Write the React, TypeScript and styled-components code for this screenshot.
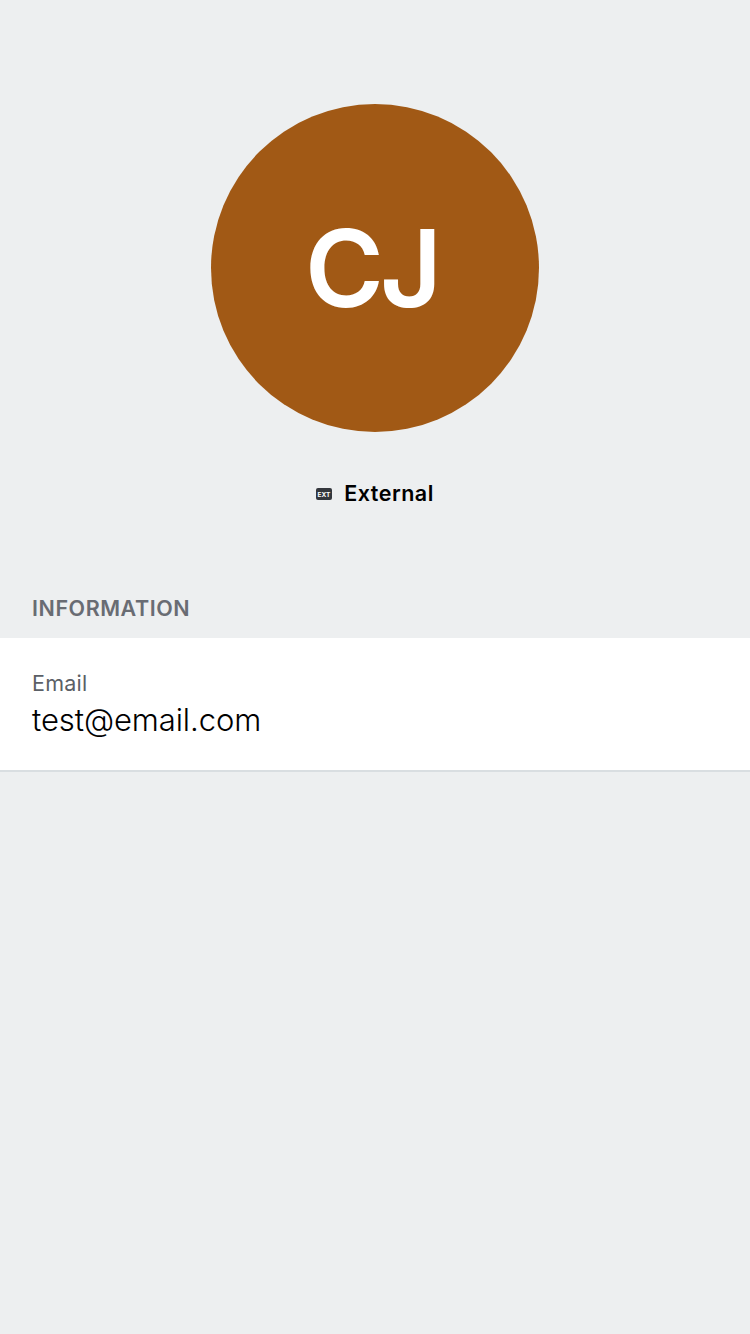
import React from "react";
import styled, { createGlobalStyle } from "styled-components";

const GlobalStyle = createGlobalStyle`
  * { box-sizing: border-box; }
  body { margin: 0; background: #edeff0; font-family: Inter, sans-serif; color: #000; -webkit-font-smoothing: antialiased; }
`;

const Screen = styled.main`
  display: flex;
  flex-direction: column;
  min-height: 1334px;
  background: #edeff0;
`;

const Profile = styled.header`
  display: flex;
  flex-direction: column;
  align-items: center;
  height: 588px;
  padding-top: 104px;
`;

const Avatar = styled.div`
  display: flex;
  align-items: center;
  justify-content: center;
  width: 328px;
  height: 328px;
  padding: 1px 7px 0 0;
  border-radius: 50%;
  background: #a15915;
  color: #fff;
  font-size: 107px;
  font-weight: 600;
  letter-spacing: -4px;
  line-height: 1;
`;

const Role = styled.div`
  display: flex;
  align-items: center;
  gap: 12px;
  margin-top: 46px;
  height: 30px;
  font-size: 21.5px;
  font-weight: 600;
  letter-spacing: 0.5px;
  line-height: 30px;

  svg {
    flex: none;
    margin-top: 2px;
  }
`;

const SectionTitle = styled.h2`
  margin: 0;
  height: 50px;
  padding: 5px 32px 0;
  color: #696c73;
  font-size: 21.5px;
  font-weight: 600;
  letter-spacing: 0.55px;
  line-height: 30px;
`;

const InfoRow = styled.section`
  height: 134px;
  padding: 30px 32px 0;
  background: #fff;
  border-bottom: 2px solid #d9dee1;
`;

const Label = styled.div`
  color: #5b5f66;
  font-size: 21.5px;
  letter-spacing: 0.25px;
  line-height: 30px;
`;

const Value = styled.div`
  padding-top: 1px;
  font-size: 31px;
  font-weight: 300;
  letter-spacing: -0.08px;
  line-height: 42px;
`;

const ExternalIcon = () => (
  <svg width="16" height="12" viewBox="0 0 16 12">
    <rect width="16" height="12" rx="2" fill="#34373d" />
    <text x="8" y="8.5" textAnchor="middle" fontSize="6.5" fontWeight="700" letterSpacing="0" fill="#fff">EXT</text>
  </svg>
);

export default function App() {
  return (
    <Screen>
      <GlobalStyle />
      <Profile>
        <Avatar><span>CJ</span></Avatar>
        <Role><ExternalIcon /><span>External</span></Role>
      </Profile>
      <SectionTitle>INFORMATION</SectionTitle>
      <InfoRow>
        <Label>Email</Label>
        <Value>test@email.com</Value>
      </InfoRow>
    </Screen>
  );
}
